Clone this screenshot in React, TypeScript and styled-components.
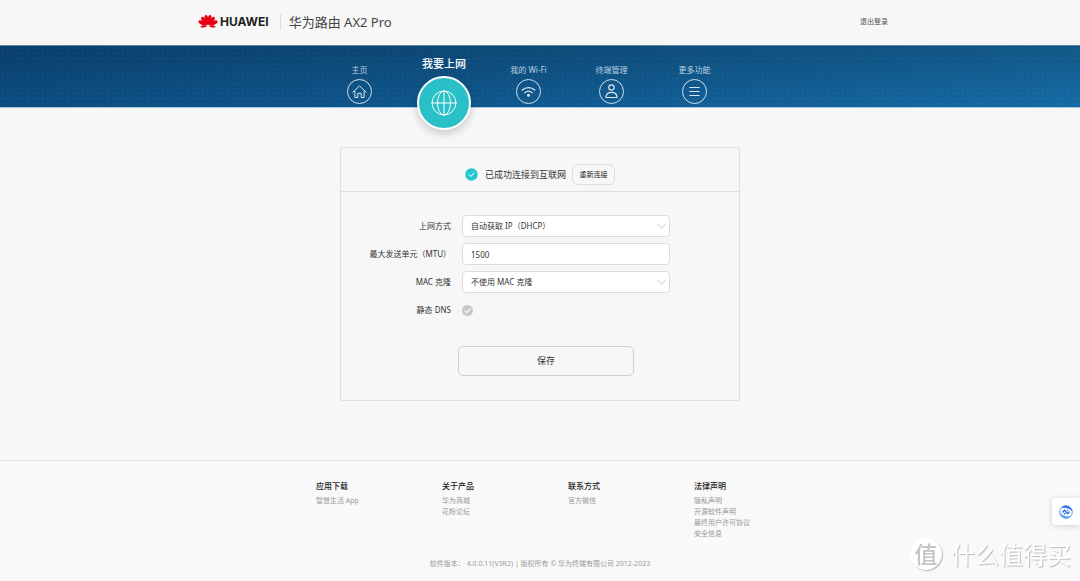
import React from "react";
import styled, { createGlobalStyle } from "styled-components";

const GlobalStyle = createGlobalStyle`
  *, *::before, *::after { box-sizing: border-box; }
  body {
    margin: 0;
    background: #f7f7f7;
    color: #333;
    font-family: "Noto Sans", "Noto Sans CJK SC", sans-serif;
    font-size: 8px;
    line-height: 12px;
  }
  button, input, select { font: inherit; color: inherit; margin: 0; }
  a { color: inherit; text-decoration: none; }
  ul { list-style: none; margin: 0; padding: 0; }
`;

const Page = styled.div`
  display: flex;
  flex-direction: column;
  min-height: 100vh;
`;

const Header = styled.header`
  display: flex;
  align-items: center;
  width: 100%;
  max-width: 696px;
  height: 45px;
  margin: 0 auto;
  padding: 0 0 2px 6px;
`;

const Brand = styled.a`
  display: flex;
  align-items: center;
  gap: 2px;
  padding-right: 11px;
  border-right: 1px solid #ddd;
  height: 16px;
`;

const BrandName = styled.span`
  font: bold 12px/16px Inter, sans-serif;
  color: #231f20;
`;

const Product = styled.h1`
  margin: 0 auto 0 8px;
  font-size: 13px;
  line-height: 18px;
  font-weight: 400;
  color: #444;
`;

const Logout = styled.a`
  font-size: 7px;
  color: #555;
`;

const Banner = styled.div`
  height: 63px;
  border-top: 1px solid #5f87a6;
  border-bottom: 1px solid #a9c6dc;
  background-color: #0f548c;
  background-image:
    linear-gradient(180deg, rgba(0, 0, 0, 0.18) 0%, rgba(0, 0, 0, 0) 100%),
    radial-gradient(circle, rgba(255, 255, 255, 0.04) 1px, transparent 1px),
    linear-gradient(90deg, #0b4d82 0%, #0f588f 45%, #156ba5 100%);
  background-size: 100% 100%, 5px 5px, 100% 100%;
`;

const Nav = styled.nav`
  display: flex;
  width: 100%;
  max-width: 444px;
  margin: 0 auto;
`;

const NavItem = styled.a<{ $active?: boolean }>`
  display: flex;
  flex-direction: column;
  align-items: center;
  width: ${(p) => (p.$active ? 86 : 83)}px;
  flex: none;
  gap: ${(p) => (p.$active ? 4 : 3)}px;
  padding-top: ${(p) => (p.$active ? 10 : 18)}px;
  font-size: ${(p) => (p.$active ? 11 : 8)}px;
  line-height: ${(p) => (p.$active ? 16 : 12)}px;
  font-weight: ${(p) => (p.$active ? 500 : 400)};
  color: ${(p) => (p.$active ? "#fff" : "#b9cfe0")};
`;

const NavCircle = styled.span<{ $active?: boolean }>`
  display: grid;
  place-items: center;
  width: ${(p) => (p.$active ? 54 : 25)}px;
  height: ${(p) => (p.$active ? 54 : 25)}px;
  border-radius: 50%;
  border: ${(p) => (p.$active ? "2px solid #fff" : "1px solid #cfdfeb")};
  background: ${(p) => (p.$active ? "#29c0c8" : "transparent")};
  box-shadow: ${(p) => (p.$active ? "0 4px 9px rgba(0, 0, 0, 0.18)" : "none")};
  color: #dce8f1;
`;

const Main = styled.main`
  flex: 1;
  padding: 39px 20px 58px;
`;

const Card = styled.section`
  max-width: 400px;
  margin: 0 auto;
  border: 1px solid #dedede;
  border-radius: 3px;
`;

const Status = styled.div`
  display: flex;
  align-items: center;
  justify-content: center;
  padding: 16px 0 6px;
  border-bottom: 1px solid #dedede;
  font-size: 9px;
`;

const StatusText = styled.span`
  margin: 0 6px 0 7px;
`;

const SmallButton = styled.button`
  width: 43px;
  height: 21px;
  padding: 0;
  border: 1px solid #dcdcdc;
  border-radius: 6px;
  background: transparent;
  font-size: 7px;
  color: #222;
`;

const Form = styled.form`
  display: flex;
  flex-direction: column;
  gap: 6px;
  padding: 23px 0 24px;
`;

const Row = styled.div`
  display: grid;
  grid-template-columns: 110px 208px;
  column-gap: 11px;
  align-items: center;
  height: 22px;
`;

const Label = styled.label`
  text-align: right;
  white-space: nowrap;
`;

const Overlap = styled.span`
  display: grid;
  align-items: center;
  & > * { grid-area: 1 / 1; }
  & > svg { pointer-events: none; }
`;

const SelectWrap = styled(Overlap)`
  & > svg { justify-self: end; margin-right: 4px; }
`;

const Select = styled.select`
  appearance: none;
  width: 100%;
  height: 22px;
  padding: 0 8px;
  border: 1px solid #dcdcdc;
  border-radius: 4px;
  background: #fff;
`;

const TextInput = styled.input`
  width: 100%;
  height: 22px;
  padding: 0 8px;
  border: 1px solid #dcdcdc;
  border-radius: 4px;
  background: #fff;
`;

const CheckWrap = styled(Overlap)`
  width: 11px;
  height: 11px;
`;

const Check = styled.input`
  appearance: none;
  width: 11px;
  height: 11px;
  border-radius: 50%;
  background: #c8c8c8;
`;

const SaveButton = styled.button`
  width: 176px;
  height: 30px;
  margin: 19px 0 0 117px;
  border: 1px solid #cfcfcf;
  border-radius: 5px;
  background: transparent;
  font-size: 9px;
`;

const Footer = styled.footer`
  padding: 19px 0 12px;
  border-top: 1px solid #e6e6e6;
  background: #f9f9f9;
  line-height: 11px;
`;

const FooterColumns = styled.div`
  display: grid;
  grid-template-columns: repeat(3, 126px) auto;
  width: 100%;
  max-width: 448px;
  min-height: 59px;
  margin: 0 auto;
`;

const FooterTitle = styled.h2`
  margin: 0 0 4px;
  font-size: 8px;
  line-height: 11px;
  font-weight: 500;
  color: #222;
`;

const FooterLinks = styled.ul`
  font-size: 7px;
  color: #999;
  white-space: nowrap;
`;

const Copyright = styled.p`
  margin: 19px 0 0;
  text-align: center;
  font-size: 7px;
  color: #999;
`;

const FloatButton = styled.button`
  position: fixed;
  right: 0;
  bottom: 56px;
  display: grid;
  place-items: center;
  width: 28px;
  height: 27px;
  padding: 0;
  border: 0;
  border-radius: 4px 0 0 4px;
  background: #fff;
  box-shadow: 0 1px 6px rgba(0, 0, 0, 0.16);
`;

const Watermark = styled.div`
  position: fixed;
  right: 9px;
  bottom: 11px;
  display: flex;
  align-items: center;
  gap: 9px;
  font-family: "Noto Sans CJK SC", sans-serif;
  font-size: 24px;
  line-height: 32px;
  color: #fff;
  text-shadow: 1px 1px 1px #bbb;
  pointer-events: none;
`;

const WatermarkBadge = styled.span`
  width: 32px;
  height: 32px;
  border-radius: 50%;
  background: #fff;
  box-shadow: 1px 1px 1px #bbb;
  text-align: center;
  text-shadow: none;
  font-size: 23px;
  line-height: 30px;
  font-weight: 500;
  color: #c4c4c4;
`;

const petalAngles = [-98, -66, -39, -13, 13, 39, 66, 98];

const HuaweiMark = () => (
  <svg width="20" height="15" viewBox="-3 2 46 32" preserveAspectRatio="none" fill="#e60012" aria-hidden="true">
    {petalAngles.map((a) => (
      <path
        key={a}
        d={
          Math.abs(a) > 90
            ? "M20 24.500C17.500 20 17 14 20 9c3 5 2.500 11 0 15.500z"
            : "M20 25.500C16 18 14.500 9 17.500 4.500c1-1.500 4-1.500 5 0 3 4.500 1.500 13.500-2.500 21z"
        }
        transform={`rotate(${a} 20 27)`}
      />
    ))}
  </svg>
);

const line = { fill: "none", stroke: "currentColor", strokeLinecap: "round", strokeLinejoin: "round" } as const;

const HomeIcon = () => (
  <svg width="15" height="15" viewBox="0 0 15 15" {...line}>
    <path d="M.8 8.300 7.500 1.800l6.700 6.500M2.900 7.200v6.300h2.900V9.300h3.400v4.200h2.900V7.200" />
  </svg>
);
const GlobeIcon = () => (
  <svg width="26" height="26" viewBox="0 0 26 26" {...line} stroke="#fff">
    <circle cx="13" cy="13" r="12" />
    <ellipse cx="13" cy="13" rx="6.500" ry="12" />
    <path d="M13 1v24M1 13h24" />
  </svg>
);
const WifiIcon = () => (
  <svg width="15" height="15" viewBox="0 0 15 15" {...line} strokeWidth="1.300">
    <path d="M1.200 6c3.600-3.200 9-3.200 12.600 0M3.800 8.700c2.200-1.900 5.200-1.900 7.400 0" />
    <circle cx="7.500" cy="11.300" r="1.500" fill="currentColor" stroke="none" />
  </svg>
);
const UserIcon = () => (
  <svg width="15" height="15" viewBox="0 0 15 15" {...line} strokeWidth="1.200">
    <circle cx="7.500" cy="3.500" r="2.700" />
    <path d="M2 13.500c0-3.300 1.800-5.200 5.500-5.200s5.500 1.900 5.500 5.200z" />
  </svg>
);
const MenuIcon = () => (
  <svg width="15" height="15" viewBox="0 0 15 15" {...line} strokeWidth="1.200">
    <path d="M2.800 3.500h9.400M2.800 7.500h9.400M2.800 11.500h9.400" />
  </svg>
);
const Chevron = () => (
  <svg width="9" height="6" viewBox="0 0 9 6" {...line} stroke="#bbb" strokeWidth=".8">
    <path d="m.5 1 4 4 4-4" />
  </svg>
);
const Tick = () => (
  <svg width="11" height="11" viewBox="0 0 11 11" {...line} stroke="#fff" strokeWidth="1.200">
    <path d="m2.800 5.800 1.900 1.900 3.700-4" />
  </svg>
);
const StatusIcon = () => (
  <svg width="13" height="13" viewBox="0 0 13 13" {...line}>
    <circle cx="6.500" cy="6.500" r="6.200" fill="#26c6d0" stroke="none" />
    <path d="m3.800 6.600 1.900 1.900 3.500-3.700" stroke="#fff" />
  </svg>
);
const AssistantIcon = () => (
  <svg width="14" height="14" viewBox="0 0 14 14" fill="none" aria-hidden="true">
    <circle cx="7" cy="7" r="6.300" stroke="#4a8cf0" strokeWidth=".9" />
    <path d="M3 2.500C6 .2 11 .8 12.800 5.500 10.500 3 7 2 3 2.500z" fill="#1763e0" stroke="#1763e0" strokeWidth=".6" />
    <path d="M11 11.500C8 13.800 3 13.200 1.200 8.500 3.500 11 7 12 11 11.500z" fill="#4a9af5" stroke="#4a9af5" strokeWidth=".6" />
    <path d="m3.500 7.500 2-2.300 3 3.600 2-2.300M5 8.300l1.200.8M7.800 5l1.200.7" stroke="#1763e0" strokeWidth="1.300" />
  </svg>
);

const navItems = [
  { label: "主页", icon: <HomeIcon /> },
  { label: "我要上网", icon: <GlobeIcon />, active: true },
  { label: "我的 Wi-Fi", icon: <WifiIcon /> },
  { label: "终端管理", icon: <UserIcon /> },
  { label: "更多功能", icon: <MenuIcon /> },
];

const footerColumns = [
  { title: "应用下载", links: ["智慧生活 App"] },
  { title: "关于产品", links: ["华为商城", "花粉论坛"] },
  { title: "联系方式", links: ["官方微信"] },
  { title: "法律声明", links: ["隐私声明", "开源软件声明", "最终用户许可协议", "安全信息"] },
];

export default function App() {
  return (
    <Page lang="zh-CN">
      <GlobalStyle />
      <Header>
        <Brand href="#">
          <HuaweiMark />
          <BrandName>HUAWEI</BrandName>
        </Brand>
        <Product>华为路由 AX2 Pro</Product>
        <Logout href="#">退出登录</Logout>
      </Header>
      <Banner>
        <Nav>
          {navItems.map((n) => (
            <NavItem key={n.label} href="#" $active={n.active}>
              {n.label}
              <NavCircle $active={n.active}>{n.icon}</NavCircle>
            </NavItem>
          ))}
        </Nav>
      </Banner>
      <Main>
        <Card>
          <Status>
            <StatusIcon />
            <StatusText>已成功连接到互联网</StatusText>
            <SmallButton type="button">重新连接</SmallButton>
          </Status>
          <Form onSubmit={(e) => e.preventDefault()}>
            <Row>
              <Label htmlFor="mode">上网方式</Label>
              <SelectWrap>
                <Select id="mode">
                  <option>自动获取 IP（DHCP）</option>
                </Select>
                <Chevron />
              </SelectWrap>
            </Row>
            <Row>
              <Label htmlFor="mtu">最大发送单元（MTU）</Label>
              <TextInput id="mtu" defaultValue="1500" />
            </Row>
            <Row>
              <Label htmlFor="mac">MAC 克隆</Label>
              <SelectWrap>
                <Select id="mac">
                  <option>不使用 MAC 克隆</option>
                </Select>
                <Chevron />
              </SelectWrap>
            </Row>
            <Row>
              <Label htmlFor="dns">静态 DNS</Label>
              <CheckWrap>
                <Check id="dns" type="checkbox" />
                <Tick />
              </CheckWrap>
            </Row>
            <SaveButton type="submit">保存</SaveButton>
          </Form>
        </Card>
      </Main>
      <Footer>
        <FooterColumns>
          {footerColumns.map((c) => (
            <div key={c.title}>
              <FooterTitle>{c.title}</FooterTitle>
              <FooterLinks>
                {c.links.map((l) => (
                  <li key={l}>
                    <a href="#">{l}</a>
                  </li>
                ))}
              </FooterLinks>
            </div>
          ))}
        </FooterColumns>
        <Copyright>软件版本： 4.0.0.11(V3R2) | 版权所有 © 华为终端有限公司 2012-2023</Copyright>
      </Footer>
      <FloatButton type="button" aria-label="助手">
        <AssistantIcon />
      </FloatButton>
      <Watermark>
        <WatermarkBadge>值</WatermarkBadge>
        什么值得买
      </Watermark>
    </Page>
  );
}
